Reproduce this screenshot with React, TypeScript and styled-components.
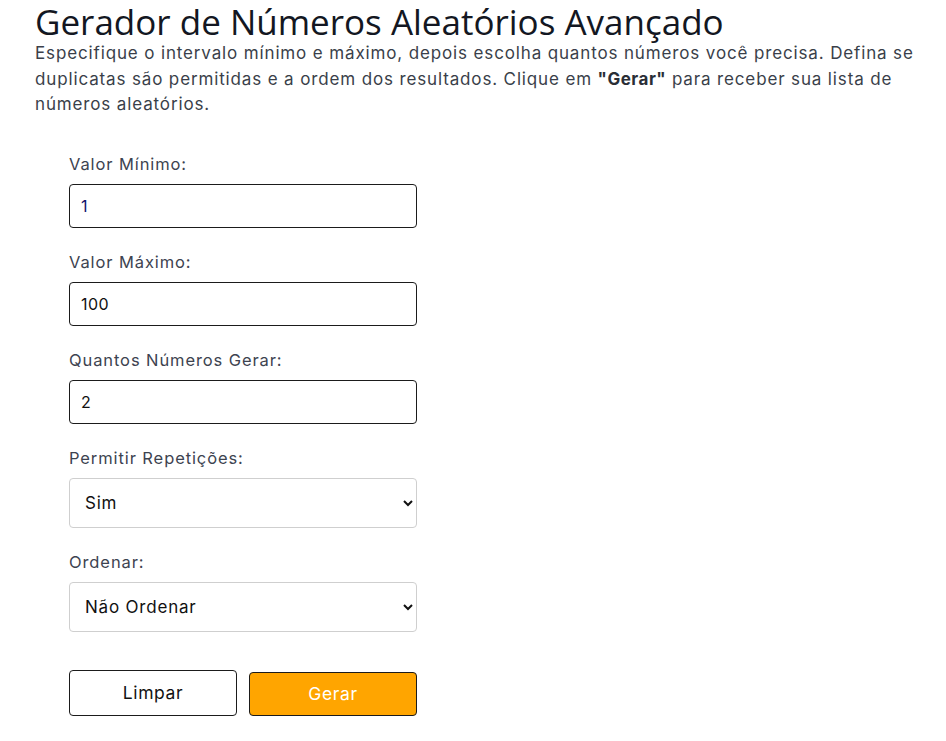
import styled, { createGlobalStyle } from 'styled-components';

const GlobalStyle = createGlobalStyle`
  html, body {
    margin: 0;
    padding: 0;
    background: #ffffff;
  }
  body {
    font-family: 'Inter', 'Noto Sans', sans-serif;
  }
`;

const Page = styled.div`
  padding: 0 15px 0 35px;
`;

const Title = styled.h1`
  margin: 0 0 -3px;
  font-family: 'Open Sans', 'Noto Sans', sans-serif;
  font-weight: 500;
  font-size: 35px;
  line-height: 44px;
  color: #131722;
`;

const Intro = styled.p`
  margin: 0;
  font-size: 17px;
  line-height: 25.5px;
  letter-spacing: 0.86px;
  color: #3a3f4a;
  strong {
    color: #2a2e36;
    font-weight: 700;
    letter-spacing: 0.5px;
  }
`;

const Form = styled.form`
  width: 348px;
  margin: 34px 0 0 34px;
  display: flex;
  flex-direction: column;
`;

const Field = styled.div`
  display: flex;
  flex-direction: column;
  gap: 8px;
  margin-bottom: 22px;
`;

const Label = styled.label`
  font-size: 16.5px;
  line-height: 24px;
  letter-spacing: 0.9px;
  color: #3d4350;
`;

const TextInput = styled.input`
  box-sizing: border-box;
  height: 44px;
  width: 100%;
  padding: 0 11px;
  border: 1px solid #1b1b1b;
  border-radius: 4px;
  font-family: inherit;
  font-size: 16px;
  letter-spacing: 0.4px;
  color: ${(p) => (p.$accent ? '#10126b' : '#111111')};
  background: #fff;
  outline: none;
`;

const Select = styled.select`
  box-sizing: border-box;
  height: 50px;
  width: 100%;
  padding: 0 11px;
  border: 1px solid #cfcfcf;
  border-radius: 4px;
  font-family: inherit;
  font-size: 17px;
  letter-spacing: 0.8px;
  color: #111;
  background: #fff;
`;

const Actions = styled.div`
  display: flex;
  gap: 12px;
  align-items: flex-start;
  margin-top: 16px;
`;

const Button = styled.button`
  box-sizing: border-box;
  flex: 1;
  height: ${(p) => (p.$primary ? '44px' : '46px')};
  margin-top: ${(p) => (p.$primary ? '2px' : '0')};
  border: 1px solid #1b1b1b;
  border-radius: 4px;
  background: ${(p) => (p.$primary ? '#ffa500' : '#ffffff')};
  color: ${(p) => (p.$primary ? '#ffffff' : '#111111')};
  font-family: inherit;
  font-size: 17.5px;
  letter-spacing: 0.6px;
  cursor: pointer;
`;

export default function App() {
  return (
    <>
      <GlobalStyle />
      <Page>
        <Title>Gerador de Números Aleatórios Avançado</Title>
        <Intro>
          Especifique o intervalo mínimo e máximo, depois escolha quantos números você precisa. Defina se
          duplicatas são permitidas e a ordem dos resultados. Clique em <strong>"Gerar"</strong> para receber sua lista de
          números aleatórios.
        </Intro>
        <Form onSubmit={(e) => e.preventDefault()}>
          <Field>
            <Label>Valor Mínimo:</Label>
            <TextInput $accent defaultValue="1" />
          </Field>
          <Field>
            <Label>Valor Máximo:</Label>
            <TextInput defaultValue="100" />
          </Field>
          <Field>
            <Label>Quantos Números Gerar:</Label>
            <TextInput defaultValue="2" />
          </Field>
          <Field>
            <Label>Permitir Repetições:</Label>
            <Select defaultValue="sim">
              <option value="sim">Sim</option>
              <option value="nao">Não</option>
            </Select>
          </Field>
          <Field>
            <Label>Ordenar:</Label>
            <Select defaultValue="none">
              <option value="none">Não Ordenar</option>
              <option value="asc">Crescente</option>
              <option value="desc">Decrescente</option>
            </Select>
          </Field>
          <Actions>
            <Button type="button">Limpar</Button>
            <Button type="submit" $primary>Gerar</Button>
          </Actions>
        </Form>
      </Page>
    </>
  );
}
